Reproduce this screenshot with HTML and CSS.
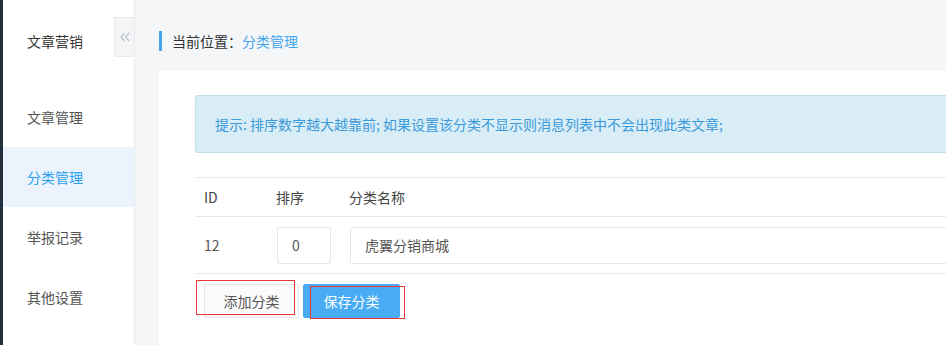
FILE: index.html
```html
<!DOCTYPE html>
<html lang="zh-CN">
<head>
  <meta charset="UTF-8">
  <title>分类管理</title>
  <link rel="stylesheet" href="styles.css">
</head>
<body>

  <div class="page">
    <aside class="sidebar">
      <div class="side-title">文章营销</div>
      <a class="toggle" href="#">
        <svg width="10" height="10" viewBox="0 0 10 10">
          <path d="M4.5 1 L1 5 L4.5 9 M9 1 L5.5 5 L9 9" fill="none" stroke="#b8c2ce" stroke-width="1.2"/>
        </svg>
      </a>
      <ul class="menu">
        <li>文章管理</li>
        <li class="active">分类管理</li>
        <li>举报记录</li>
        <li>其他设置</li>
      </ul>
    </aside>

    <main class="main">
      <div class="crumb">当前位置：<span>分类管理</span></div>

      <div class="panel">
        <div class="tip">提示: 排序数字越大越靠前; 如果设置该分类不显示则消息列表中不会出现此类文章;</div>

        <table class="cats">
          <thead>
            <tr>
              <th class="c-id">ID</th>
              <th class="c-sort">排序</th>
              <th>分类名称</th>
            </tr>
          </thead>
          <tbody>
            <tr>
              <td>12</td>
              <td><input type="text" class="in-sort" value="0"></td>
              <td><input type="text" class="in-name" value="虎翼分销商城"></td>
            </tr>
          </tbody>
        </table>

        <div class="actions">
          <button class="btn">添加分类</button>
          <button class="btn btn-blue">保存分类</button>
          <span class="mark mark-1"></span>
          <span class="mark mark-2"></span>
        </div>
      </div>
    </main>
  </div>

</body>
</html>
```

FILE: styles.css
```css
html, body {
  margin: 0;
  padding: 0;
  height: 100%;
  overflow: hidden;
}

body {
  font-family: "Noto Sans CJK SC", "Liberation Sans", sans-serif;
  font-size: 14px;
  color: #333;
  background-color: #f4f6f8;
}

.page {
  display: flex;
  width: 1300px;
  height: 100%;
}

.sidebar {
  position: relative;
  width: 131px;
  flex: none;
  background: #fff;
  border-left: 3px solid #23303e;
  border-right: 1px solid #e8eaee;
}

.side-title {
  height: 87px;
  box-sizing: border-box;
  padding: 31px 0 0 24px;
  line-height: 20px;
  color: #333;
}

.toggle {
  position: absolute;
  top: 17px;
  right: 0;
  width: 19px;
  height: 38px;
  display: flex;
  align-items: center;
  justify-content: center;
  background: #f4f5f7;
  border: 1px solid #e8eaee;
  border-right: none;
}

.menu {
  list-style: none;
  margin: 0;
  padding: 0;
}

.menu li {
  height: 60px;
  line-height: 60px;
  padding-left: 24px;
  color: #555;
}

.menu li.active {
  background: #ebf4fd;
  color: #2a9ef0;
}

.main {
  flex: 1;
  padding: 31px 0 0 24px;
  overflow: hidden;
}

.crumb {
  height: 20px;
  line-height: 20px;
  border-left: 3px solid #45a6f0;
  padding-left: 10px;
  margin-bottom: 20px;
  color: #333;
}

.crumb span {
  color: #45a6f0;
}

.panel {
  background: #fff;
  padding: 24px 0 0 36px;
  height: 300px;
}

.tip {
  height: 56px;
  line-height: 56px;
  padding-left: 19px;
  background: #d9edf7;
  border: 1px solid #c4dfea;
  border-radius: 2px;
  color: #3b9ad9;
  margin-bottom: 24px;
}

.cats {
  width: 100%;
  border-collapse: collapse;
}

.cats th,
.cats td {
  text-align: left;
  font-weight: normal;
  border-top: 1px solid #e8e8e8;
  border-bottom: 1px solid #e8e8e8;
  padding: 0 9px;
  color: #555;
}

.cats th {
  height: 38px;
  color: #444;
}

.cats td {
  height: 56px;
}

.c-id,
.c-sort {
  width: 54px;
}

.cats input {
  font-family: inherit;
  font-size: 14px;
  color: #555;
  height: 37px;
  box-sizing: border-box;
  border: 1px solid #e6e6e6;
  border-radius: 2px;
  padding: 0 14px;
  margin-left: 1px;
  outline: none;
}

.in-sort {
  width: 54px;
}

.in-name {
  width: 100%;
}

.actions {
  position: relative;
  display: flex;
  gap: 4px;
  padding: 10px 0 0 9px;
}

.btn {
  font-family: inherit;
  font-size: 14px;
  height: 34px;
  width: 95px;
  padding: 0;
  white-space: nowrap;
  border: 1px solid #e6e6e6;
  border-radius: 2px;
  background: #fbfbfb;
  color: #555;
  cursor: pointer;
}

.btn-blue {
  width: 97px;
  background: #48abf3;
  border-color: #48abf3;
  color: #fff;
}

.mark {
  position: absolute;
  border: 1px solid #e53935;
}

.mark-1 {
  left: 1px;
  top: 6px;
  width: 97px;
  height: 33px;
}

.mark-2 {
  left: 115px;
  top: 12px;
  width: 93px;
  height: 31px;
}
```
